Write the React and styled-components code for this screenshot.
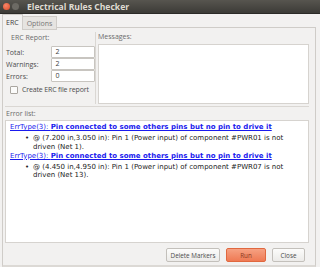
import React from "react";
import styled, { createGlobalStyle } from "styled-components";

const Global = createGlobalStyle`
  html, body { margin: 0; padding: 0; background: #f2f1f0; }
  body { width: 320px; height: 267px; overflow: hidden; font-family: "Open Sans", "DejaVu Sans", sans-serif; }
`;

const Window = styled.div`
  width: 320px;
  height: 267px;
  display: flex;
  flex-direction: column;
  background: #f2f1f0;
  color: #3c3c3c;
  font-size: 7px;
`;

const TitleBar = styled.div`
  height: 13px;
  flex: none;
  display: flex;
  align-items: center;
  padding-left: 3px;
  gap: 2px;
  background: linear-gradient(#57554f, #3c3b37);
  border-bottom: 1px solid #2b2a27;
`;

const Dot = styled.span`
  width: 7px;
  height: 7px;
  border-radius: 50%;
  background: ${(p) => p.$bg};
  flex: none;
`;

const Title = styled.span`
  margin-left: 6px;
  font-weight: 700;
  font-size: 8.6px;
  color: #dfdbd2;
`;

const Body = styled.div`
  flex: 1;
  display: flex;
  flex-direction: column;
  padding: 0 4px 0 2px;
`;

const Tabs = styled.div`
  display: flex;
  height: 14px;
  flex: none;
`;

const Tab = styled.div`
  padding: 0 ${(p) => (p.$active ? 3 : 4)}px;
  display: flex;
  align-items: center;
  border: 1px solid #cfccc8;
  border-bottom: ${(p) => (p.$active ? "none" : "1px solid #cfccc8")};
  background: ${(p) => (p.$active ? "#f2f1f0" : "#e6e4e1")};
  color: ${(p) => (p.$active ? "#3c3c3c" : "#777")};
  margin-right: -1px;
  height: ${(p) => (p.$active ? "14px" : "12px")};
  margin-top: ${(p) => (p.$active ? "0" : "2px")};
  position: relative;
  z-index: ${(p) => (p.$active ? 1 : 0)};
`;

const Panel = styled.div`
  flex: 1;
  border: 1px solid #cfccc8;
  border-bottom: 2px solid #dcd9d5;
  margin-top: -1px;
  display: flex;
  flex-direction: column;
  padding: 4px 3px 0 2px;
`;

const TopRow = styled.div`
  display: flex;
  height: 72px;
  flex: none;
`;

const Report = styled.div`
  width: 90px;
  flex: none;
  display: flex;
  flex-direction: column;
`;

const GroupLabel = styled.div`
  color: #6b6b6b;
  padding-left: ${(p) => p.$indent || 0}px;
  height: ${(p) => p.$h}px;
  line-height: ${(p) => p.$lh || p.$h}px;
  flex: none;
`;

const FieldRow = styled.div`
  display: flex;
  align-items: center;
  height: 12px;
  margin-bottom: ${(p) => (p.$last ? 0 : 0)}px;
`;

const FieldLabel = styled.span`
  width: 46px;
  padding-left: 1px;
  color: #4c4c4c;
`;

const Input = styled.div`
  width: 39px;
  height: 10px;
  background: #fff;
  border: 1px solid #c8c5c0;
  border-radius: 1px;
  padding-left: 3px;
  line-height: 10px;
  color: #3c3c3c;
`;

const CheckRow = styled.div`
  display: flex;
  align-items: center;
  gap: 4px;
  margin-top: 3px;
  padding-left: 5px;
  color: #4c4c4c;
  white-space: nowrap;
  letter-spacing: -0.15px;
`;

const Box = styled.span`
  width: 6px;
  height: 6px;
  border: 1px solid #aaa6a0;
  background: #fbfbfa;
  border-radius: 1px;
  flex: none;
`;

const Messages = styled.div`
  flex: 1;
  display: flex;
  flex-direction: column;
  border-left: 1px solid #dad7d3;
  padding-left: 2px;
  margin-right: 3px;
`;

const WhiteBox = styled.div`
  background: #fff;
  border: 1px solid #d6d3cf;
  flex: 1;
`;

const ErrorSection = styled.div`
  flex: 1;
  display: flex;
  flex-direction: column;
  margin-top: 2px;
  border-top: 1px solid #dad7d3;
  margin-right: 3px;
`;

const ErrorBox = styled(WhiteBox)`
  font-family: "DejaVu Sans", sans-serif;
  font-size: 7px;
  padding: 2px 3px 0 4px;
  line-height: 8.5px;
  color: #222;
`;

const ErrTitle = styled.div`
  color: #1a1aee;
  text-decoration: underline;
  white-space: nowrap;
  margin-bottom: 2.5px;
`;

const Strong = styled.b`
  font-weight: 700;
`;

const Item = styled.div`
  display: flex;
  padding-left: 15px;
  margin-bottom: 0.5px;
`;

const Bullet = styled.span`
  width: 8px;
  flex: none;
`;

const ItemText = styled.span`
  flex: 1;
  padding-right: 2px;
`;

const Footer = styled.div`
  display: flex;
  justify-content: flex-end;
  gap: 6px;
  padding: 5px 7px 0 0;
  height: 22px;
  box-sizing: border-box;
  flex: none;
`;

const Button = styled.div`
  height: 14px;
  box-sizing: border-box;
  width: ${(p) => p.$w}px;
  display: flex;
  align-items: center;
  justify-content: center;
  border: 1px solid ${(p) => (p.$primary ? "#e0683f" : "#c3c0bb")};
  border-radius: 2px;
  background: ${(p) =>
    p.$primary ? "linear-gradient(#f6a182, #ef7a54)" : "linear-gradient(#fcfcfb, #ecebe9)"};
  color: ${(p) => (p.$primary ? "#8a3a20" : "#4c4c4c")};
  font-size: 6.3px;
  white-space: nowrap;
`;

const errors = [
  { pos: "(7.200 in,3.050 in)", comp: "#PWR01", net: "Net 1" },
  { pos: "(4.450 in,4.950 in)", comp: "#PWR07", net: "Net 13" },
];

export default function App() {
  return (
    <>
      <Global />
      <Window>
        <TitleBar>
          <Dot $bg="radial-gradient(circle at 40% 35%, #f5866a, #df4a25)" />
          <Dot $bg="#6c6a64" />
          <Title>Electrical Rules Checker</Title>
        </TitleBar>
        <Body>
          <Tabs>
            <Tab $active>ERC</Tab>
            <Tab>Options</Tab>
          </Tabs>
          <Panel>
            <TopRow>
              <Report>
                <GroupLabel $indent={6} $h={14} $lh={12}>ERC Report:</GroupLabel>
                <FieldRow>
                  <FieldLabel>Total:</FieldLabel>
                  <Input>2</Input>
                </FieldRow>
                <FieldRow>
                  <FieldLabel>Warnings:</FieldLabel>
                  <Input>2</Input>
                </FieldRow>
                <FieldRow>
                  <FieldLabel>Errors:</FieldLabel>
                  <Input>0</Input>
                </FieldRow>
                <CheckRow>
                  <Box />
                  Create ERC file report
                </CheckRow>
              </Report>
              <Messages>
                <GroupLabel $h={12} $lh={10}>Messages:</GroupLabel>
                <WhiteBox />
              </Messages>
            </TopRow>
            <ErrorSection>
              <GroupLabel $indent={1} $h={13} $lh={14}>Error list:</GroupLabel>
              <ErrorBox>
                {errors.map((e) => (
                  <React.Fragment key={e.comp}>
                    <ErrTitle>
                      ErrType(3): <Strong>Pin connected to some others pins but no pin to drive it</Strong>
                    </ErrTitle>
                    <Item>
                      <Bullet>•</Bullet>
                      <ItemText>
                        @ {e.pos}: Pin 1 (Power input) of component {e.comp} is not driven ({e.net}).
                      </ItemText>
                    </Item>
                  </React.Fragment>
                ))}
              </ErrorBox>
            </ErrorSection>
            <Footer>
              <Button $w={54}>Delete Markers</Button>
              <Button $primary $w={40}>Run</Button>
              <Button $w={33}>Close</Button>
            </Footer>
          </Panel>
        </Body>
      </Window>
    </>
  );
}
